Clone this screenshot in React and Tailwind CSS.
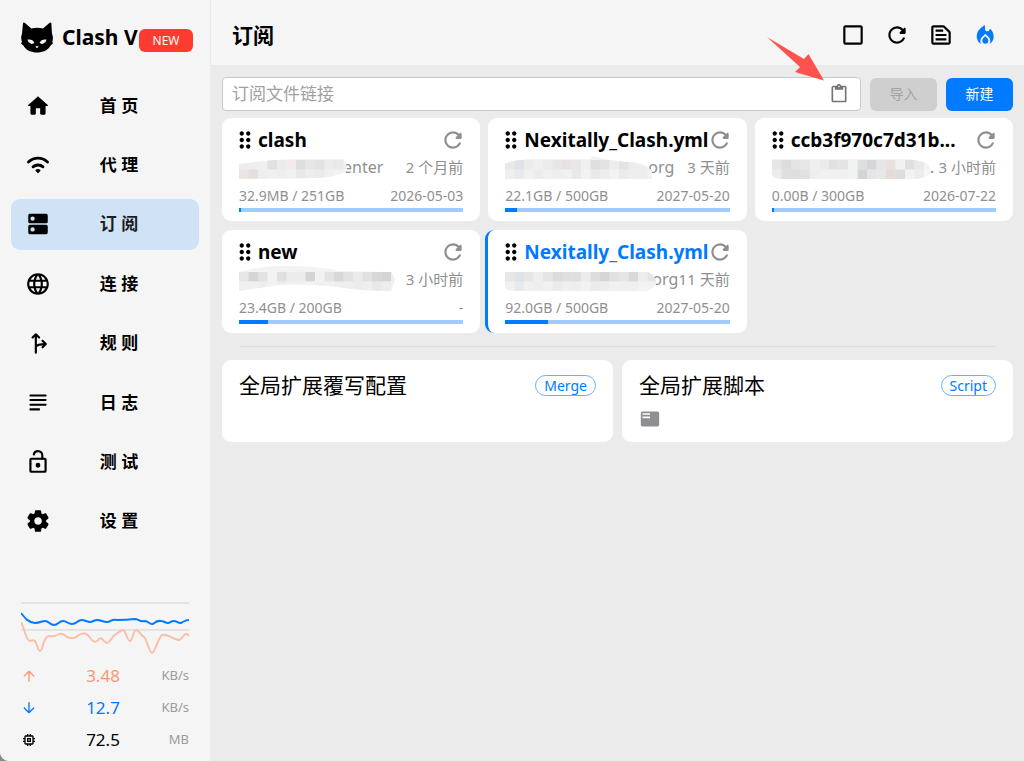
import React from "react";
import {
  MdLanguage,
  MdCheckBoxOutlineBlank,
  MdOutlineTextSnippet,
  MdDragIndicator,
  MdOutlineContentPaste,
  MdFeaturedPlayList,
  MdMemory,
} from "react-icons/md";

function Glyph({ className = "size-[26px]", children }) {
  return (
    <svg viewBox="0 0 24 24" fill="currentColor" className={className} aria-hidden="true">
      {children}
    </svg>
  );
}

function LineGlyph({ className = "size-[26px]", children }) {
  return (
    <svg
      viewBox="0 0 24 24"
      fill="none"
      stroke="currentColor"
      strokeWidth="2"
      strokeLinecap="round"
      strokeLinejoin="round"
      className={className}
      aria-hidden="true"
    >
      {children}
    </svg>
  );
}

const HomeIcon = () => (
  <Glyph>
    <path d="M10 19v-5h4v5c0 .55.45 1 1 1h3c.55 0 1-.45 1-1v-7h1.7c.46 0 .68-.57.33-.87L12.67 3.6c-.38-.34-.96-.34-1.34 0l-8.36 7.53c-.34.3-.13.87.33.87H5v7c0 .55.45 1 1 1h3c.55 0 1-.45 1-1z" />
  </Glyph>
);

const WifiIcon = () => (
  <LineGlyph>
    <path strokeWidth="2.6" d="M3.200 9.200C8.500 4.500 15.500 4.500 20.800 9.200M7.400 13.700C10 11.400 14 11.400 16.600 13.700" />
    <path fill="currentColor" strokeWidth="1.400" d="M10.400 17q1.600-1 3.200 0L12 18.800z" />
  </LineGlyph>
);

const DnsIcon = () => (
  <Glyph>
    <path
      fillRule="evenodd"
      d="M4.500 2.600h15A1.500 1.500 0 0 1 21 4.100v5.800a1.500 1.500 0 0 1-1.500 1.500h-15A1.500 1.500 0 0 1 3 9.900v-5.800A1.500 1.500 0 0 1 4.500 2.600zM7 5a2 2 0 1 0 0 4 2 2 0 0 0 0-4zM4.500 12.800h15a1.500 1.500 0 0 1 1.500 1.500v5.600a1.500 1.500 0 0 1-1.500 1.500h-15A1.500 1.500 0 0 1 3 19.900v-5.600A1.500 1.500 0 0 1 4.500 12.800zM7 15a2 2 0 1 0 0 4 2 2 0 0 0 0-4z"
    />
  </Glyph>
);

const ForkIcon = () => (
  <LineGlyph>
    <path d="M10 21V4.500M7 7l3-3 3 3M10 15.500C11 13.500 13 13 19 13M16.200 10l3 3-3 3" />
  </LineGlyph>
);

const SubjectIcon = () => (
  <LineGlyph>
    <path strokeWidth="1.900" d="M5 5h14M5 9.300h14M5 13.600h14M5 17.900h8" />
  </LineGlyph>
);

const LockIcon = () => (
  <LineGlyph>
    <rect x="5" y="9" width="14" height="12" rx="1" />
    <path d="M16 9V6.200C16 3.600 14.200 2 12 2 10 2 8.500 3.300 8.100 5" />
    <circle cx="12" cy="15" r="1.200" fill="currentColor" />
  </LineGlyph>
);

const SettingsIcon = () => (
  <Glyph>
    <path d="M19.500 12c0-.23-.01-.45-.03-.68l1.860-1.410c.4-.3.51-.86.26-1.300l-1.870-3.230a.987.987 0 0 0-1.250-.42l-2.150.91c-.37-.26-.76-.49-1.170-.68l-.29-2.310c-.06-.5-.49-.88-.99-.88h-3.730c-.51 0-.94.38-1 .88l-.29 2.310c-.41.19-.8.42-1.170.68l-2.150-.91c-.46-.2-1-.02-1.250.42L2.410 8.620c-.25.44-.14.99.26 1.300l1.860 1.410a7.343 7.343 0 0 0 0 1.350l-1.860 1.410c-.4.3-.51.86-.26 1.300l1.870 3.230c.25.44.79.62 1.250.42l2.150-.91c.37.26.76.49 1.170.68l.29 2.310c.06.5.49.88.99.88h3.730c.5 0 .93-.38.99-.88l.29-2.310c.41-.19.8-.42 1.170-.68l2.150.91c.46.2 1 .02 1.250-.42l1.870-3.230c.25-.44.14-.99-.26-1.300l-1.860-1.410c.03-.23.04-.45.04-.68zm-7.460 3.500c-1.930 0-3.500-1.570-3.500-3.500s1.570-3.500 3.500-3.500 3.500 1.570 3.500 3.500-1.570 3.500-3.500 3.500z" />
  </Glyph>
);

const RefreshIcon = () => (
  <Glyph>
    <path d="M17.650 6.350c-1.630-1.630-3.940-2.570-6.480-2.310-3.670.37-6.690 3.350-7.100 7.020C3.520 15.910 7.270 20 12 20c3.190 0 5.930-1.870 7.210-4.560.32-.67-.16-1.440-.9-1.440-.37 0-.72.2-.88.53-1.130 2.430-3.840 3.970-6.800 3.310-2.220-.49-4.010-2.300-4.480-4.520C5.310 9.440 8.260 6 12 6c1.660 0 3.140.69 4.220 1.780l-1.510 1.510c-.63.63-.19 1.710.7 1.710H19c.55 0 1-.45 1-1V6.410c0-.89-1.080-1.340-1.710-.71l-.64.65z" />
  </Glyph>
);

const FireIcon = () => (
  <svg viewBox="0 0 78 78" fill="currentColor" className="size-[26px]" aria-hidden="true">
    <path d="M39 11V20Q39 28 46 28 52 28 54 20 65 29 65 43 65 58 53 66 55 61 55 57 55 50 50 45L40 35 30 45Q25 50 25 57 25 61 27 66 14 58 14 42 14 25 35 11Q39 9 39 11Z" />
    <path d="M40 43L34 49Q31 52 31 56C31 61 35 65 40 65S49 61 49 56Q49 52 46 49Z" />
  </svg>
);

const CatLogo = () => (
  <svg viewBox="63 65 96 92" className="h-[31px] w-8 shrink-0" aria-hidden="true">
    <path d="M69 68Q70 64 74 67L94 84Q111 79 129 84L149 67Q153 64 154 68L156 100Q161 112 157 124L159 129 152 135C143 150 128 156 111 156S79 150 70 135L63 129 66 124Q61 112 66 100Z" />
    <path fill="#f5f5f5" d="M82 117Q99 115 103 127 100 131 93 130 84 127 82 117zM140 117Q123 115 119 127 122 131 129 130 138 127 140 117zM106 138Q111 135 116 138L111 143z" />
  </svg>
);

const navItems = [
  { label: "首 页", icon: <HomeIcon /> },
  { label: "代 理", icon: <WifiIcon /> },
  { label: "订 阅", icon: <DnsIcon />, active: true },
  { label: "连 接", icon: <MdLanguage className="size-[26px]" /> },
  { label: "规 则", icon: <ForkIcon /> },
  { label: "日 志", icon: <SubjectIcon /> },
  { label: "测 试", icon: <LockIcon /> },
  { label: "设 置", icon: <SettingsIcon /> },
];

function Traffic() {
  return (
    <svg viewBox="0 0 168 56" preserveAspectRatio="none" className="h-14 w-full" fill="none" aria-hidden="true">
      <path stroke="#dedede" strokeWidth="1.400" d="M0 2H168M0 29H168" />
      <path
        stroke="#fbbfa9"
        strokeWidth="2"
        d="M0 21C3 26 5 40 9 40 11 40 12 38 14 40 16 43 17 50 19 50 22 50 22 35 28 35 32 35 33 36 36 34 40 31 43 33 46 36 50 38 55 37 58 34 63 31 67 33 70 38 73 42 76 41 78 38 81 35 83 42 86 42 89 42 91 35 95 33 98 31 101 29 102 29 105 29 106 40 109 40 112 40 112 29 115 29 118 29 119 34 123 36 126 38 128 52 131 52 134 52 136 39 141 34 146 32 153 39 158 39 161 39 162 33 165 33Q167 33 168 35"
      />
      <path
        stroke="#007aff"
        strokeWidth="2"
        d="M0 12C4 17 8 22 14 22 19 22 21 20 24 20 28 20 29 24 33 24 37 24 38 20 42 20 46 20 47 23 51 23 56 23 56 19 61 19 64 19 66 21 69 21 72 21 73 19 76 19 80 19 82 21 86 21 90 21 90 18 96 19Q105 19 114 18C118 18 118 21 124 20 127 20 128 23 131 23 134 23 134 19 140 20 143 20 144 22 147 22 149 22 150 20 153 20 156 20 156 22 160 22 164 20 164 19 168 19"
      />
    </svg>
  );
}

const stats = [
  {
    value: "3.48",
    unit: "KB/s",
    color: "text-[#ff9472]",
    icon: <LineGlyph className="size-4"><path d="M12 20V5M5 12l7-7 7 7" /></LineGlyph>,
  },
  {
    value: "12.7",
    unit: "KB/s",
    color: "text-[#007aff]",
    icon: <LineGlyph className="size-4"><path d="M12 4v15M5 12l7 7 7-7" /></LineGlyph>,
  },
  { value: "72.5", unit: "MB", color: "text-black", icon: <MdMemory className="size-4" /> },
];

function Sidebar() {
  return (
    <aside className="flex w-[211px] shrink-0 flex-col border-r border-[#ebebeb] bg-[#f5f5f5]">
      <div className="relative flex h-20 items-center gap-[9px] pl-[21px] pb-[6px]">
        <CatLogo />
        <span className="text-[21px] leading-7 font-bold whitespace-nowrap">Clash V</span>
        <span className="absolute top-[29px] left-[139px] flex h-[23px] w-[54px] items-center justify-center rounded-md bg-[#ff3b30] text-xs text-white">
          NEW
        </span>
      </div>
      <nav className="flex min-h-[467px] flex-col justify-between px-[11px]">
        {navItems.map((item) => (
          <a
            key={item.label}
            href="#"
            className={
              item.active
                ? "flex h-[51px] items-center rounded-[9px] bg-[#d0e2f6] pl-[14px] text-[#1c1c1c]"
                : "flex h-[51px] items-center rounded-[9px] pl-[14px]"
            }
          >
            <span className="text-black">{item.icon}</span>
            <span className="flex-1 pr-3 text-center text-[17px] leading-6 font-bold">{item.label}</span>
          </a>
        ))}
      </nav>
      <div className="mt-auto px-[21px] pb-[5px]">
        <Traffic />
        <ul className="mt-[3px]">
          {stats.map((s) => (
            <li key={s.value} className={`flex h-8 items-center ${s.color}`}>
              <span className="flex w-4 justify-center">{s.icon}</span>
              <span className="flex-1 pl-4 text-center text-[17px] leading-6">{s.value}</span>
              <span className="w-9 text-right text-[13px] text-[#9b9b9b]">{s.unit}</span>
            </li>
          ))}
        </ul>
      </div>
    </aside>
  );
}

/* Pixelated cover over a subscription host: two rows of cells inside a soft outline. */
function Mosaic({ width, rows, shape, clip }) {
  const cell = 9.5;
  return (
    <svg viewBox={`0 0 ${width} 26`} style={{ width }} className="relative h-[26px] shrink-0" aria-hidden="true">
      <clipPath id={clip}>
        <path d={shape} />
      </clipPath>
      <g clipPath={`url(#${clip})`}>
        <rect width={width} height="26" fill="#f3f3f3" />
        {rows.map((row, r) =>
          row.split(" ").map((c, i) => (
            <rect key={`${r}-${i}`} x={i * cell} y={6 + r * cell} width={cell + 0.3} height={cell + 0.3} fill={`#${c}`} />
          ))
        )}
      </g>
    </svg>
  );
}

const profiles = [
  {
    name: "clash", host: "enter", updated: "2 个月前", usage: "32.9MB / 251GB", expire: "2026-05-03", used: 1, width: 108,
    rows: [
      "ececec eeeeee f0f0f0 e1e1e1 ebebeb f2ebe9 dedede e6e6e6 e2e2e2 ececec e9e9e9 f1f1f1",
      "e9e6e6 e6dedc eeeeee f0f0f0 eeeeee f1f1f1 e8e8e8 ededed e9eceb f0f0f0 f2f2f2 f4f4f4",
    ],
    shape: "M0 10Q25 7 34 6Q70 4 104 5Q108 10 108 17Q96 23 80 24L0 25Z",
  },
  {
    name: "Nexitally_Clash.yml", host: "org", updated: "3 天前", usage: "22.1GB / 500GB", expire: "2027-05-20", used: 5, width: 147,
    rows: [
      "e8e8e8 dfe3e8 ececec f0f0f0 ebebeb e7e7e7 e8e1df e7e7e7 f0f0f0 dddfe2 e3e3e3 ededed e3e3e3 ececec eeeeee f1f1f1",
      "efefef e8eaed f1f1f1 ececec f0f0f0 eeeeee f0f0f0 e9e9e9 f2f2f2 e9e9e9 ededed f2f2f2 ebebeb eeeeee ededed f2f2f2",
    ],
    shape: "M0 10Q10 5 28 5L85 5 87 2Q112 8 125 8Q143 10 147 18V25H0Z",
  },
  {
    name: "ccb3f970c7d31b...", host: ".", gap: true, updated: "3 小时前", usage: "0.00B / 300GB", expire: "2026-07-22", used: 1, width: 158,
    rows: [
      "e6e6e6 dcdcdc e4e4e4 e6e6e6 efefef ebebeb e1e1e1 e4e4e4 f2f2f2 dddfe0 d5d6d9 e5e5e5 e9e1df f1f1f1 dfdfdf e9e9e9 f4f4f4",
      "ececec dfdfdf dedede e1e1e1 eeeeee f0f0f0 f1f1f1 f0f0f0 f2f2f2 d3d5d8 e5e5e5 e7e7e7 e5dcda dddddd f2f2f2 ececec f6f6f6",
    ],
    shape: "M0 5H135Q155 7 158 13V20Q152 25 140 25H12Q0 25 0 20Z",
  },
  {
    name: "new", host: "", updated: "3 小时前", usage: "23.4GB / 200GB", expire: "-", used: 13, width: 156,
    rows: [
      "e6e6e6 d5d5d5 e2e2e2 f2f2f2 dfdfdf ebebeb eeebea d4d5d8 f2f2f2 e3e3e3 d7d8da e2e2e2 ebebeb e1e1e1 d7d7d9 d2d4d8 eeeeee",
      "f0f0f0 f1f1f1 eeeeee f2f2f2 ededed f1f1f1 efefef f3f3f3 f0f0f0 f1f1f1 eeeeee efefef ececec efefef e9e9e9 ededed f2f2f2",
    ],
    shape: "M0 6Q20 0 45 0Q80 0 100 5L152 6 156 14 152 25Q120 25 100 21Q60 17 40 19L0 25Z",
  },
  {
    name: "Nexitally_Clash.yml", host: "org", updated: "11 天前", usage: "92.0GB / 500GB", expire: "2027-05-20", used: 19, width: 151, active: true,
    rows: [
      "e7e7e7 dfe3e8 e6e6e6 eeeeee e5e5e5 dcdcdc dfdfdf dde0e3 ececec dcdcdc d4d6d8 e1e1e1 e5e5e5 d8d9db ededed e5e5e5",
      "f1f1f1 e7eaec f0f0f0 eeeeee f1f1f1 ebebeb efefef eeeeee f2f2f2 ebebeb ededed f1f1f1 f0f0f0 f0f0f0 f3f3f3 f2f2f2",
    ],
    shape: "M0 6H143Q151 10 151 18Q146 25 139 25H10Q0 25 0 20Z",
  },
];

function ProfileCard({ p, index }) {
  return (
    <article
      className={
        p.active
          ? "-ml-[3px] min-w-0 rounded-[9px] border-l-[3px] border-[#007aff] bg-white px-[17px] pt-2 pb-[9px]"
          : "min-w-0 rounded-[9px] bg-white px-[17px] pt-2 pb-[9px]"
      }
    >
      <div className="flex h-7 items-center">
        <MdDragIndicator className="-ml-[7px] size-[26px] shrink-0" />
        <h2
          className={
            p.active
              ? "min-w-0 flex-1 text-[19px] leading-7 font-bold whitespace-nowrap text-[#007aff]"
              : "min-w-0 flex-1 text-[19px] leading-7 font-bold whitespace-nowrap"
          }
        >
          {p.name}
        </h2>
        <button type="button" aria-label="更新" className="-mr-[3px] shrink-0 text-[#8e8e8e]">
          <RefreshIcon />
        </button>
      </div>
      <div className="flex h-[26px] items-center whitespace-nowrap text-[#8f8f8f]">
        <Mosaic width={p.width} rows={p.rows} shape={p.shape} clip={`cover-${index}`} />
        <span className={p.gap ? "text-[17px] leading-6" : "-ml-1 text-[16px] leading-6"}>{p.host}</span>
        <span className="ml-auto text-[15px] leading-6">{p.updated}</span>
      </div>
      <div className="mt-[3px] mb-px flex h-6 items-center justify-between text-[14px] text-[#8f8f8f]">
        <span>{p.usage}</span>
        <span>{p.expire}</span>
      </div>
      <div className="h-1 bg-[#9fcbff]">
        <div className="h-full bg-[#007aff]" style={{ width: `${p.used}%` }} />
      </div>
    </article>
  );
}

function ExtensionCard({ title, tag, children }) {
  return (
    <article className="min-h-[82px] rounded-[9px] bg-white px-[17px] pt-[11px]">
      <div className="flex h-7 items-center justify-between">
        <h2 className="text-[21px] leading-7">{title}</h2>
        <span className="flex h-[21px] items-center rounded-full border border-[#66afff] px-2 text-[14px] text-[#007aff]">
          {tag}
        </span>
      </div>
      {children}
    </article>
  );
}

export default function App() {
  return (
    <div className="min-h-screen bg-[#8a8a8a] font-['Noto_Sans','Noto_Sans_CJK_SC',sans-serif] text-black">
      <div className="flex min-h-screen overflow-hidden rounded-bl-[9px] bg-[#ebebeb]">
        <Sidebar />
        <div className="flex min-w-0 flex-1 flex-col">
          <header className="flex h-[66px] items-center justify-between border-b border-[#e8e8e8] bg-[#f5f5f5] pt-[5px] pr-[26px] pl-[21px]">
            <h1 className="text-[21px] leading-7 font-bold">订阅</h1>
            <div className="flex gap-[18px]">
              <button type="button" aria-label="批量"><MdCheckBoxOutlineBlank className="size-[26px]" /></button>
              <button type="button" aria-label="更新全部"><RefreshIcon /></button>
              <button type="button" aria-label="查看配置"><MdOutlineTextSnippet className="size-[26px]" /></button>
              <button type="button" aria-label="重新激活" className="text-[#007aff]"><FireIcon /></button>
            </div>
          </header>
          <main className="flex-1 px-[11px] pt-[11px]">
            <form className="flex items-center gap-[9px]">
              <div className="relative flex h-[34px] flex-1 items-center rounded-[4px] border border-[#c8c8c8] bg-white pr-[11px] pl-[9px]">
                <input
                  type="text"
                  aria-label="订阅文件链接"
                  placeholder="订阅文件链接"
                  className="min-w-0 flex-1 text-[17px] leading-6 outline-none placeholder:text-[#a0a0a0]"
                />
                <button type="button" aria-label="粘贴" className="text-[#757575]">
                  <MdOutlineContentPaste className="size-5" />
                </button>
                <svg viewBox="0 0 58 44" className="absolute right-[35px] bottom-[29px] h-11 w-[58px]" aria-hidden="true">
                  <path fill="#ff524f" d="M0 0L37 22 41.500 17 57 43.500 28 35 33 30Z" />
                </svg>
              </div>
              <button type="button" disabled className="h-[33px] w-[67px] rounded-md bg-[#cfcfcf] pb-[2px] text-[14px] text-[#a3a3a3]">
                导入
              </button>
              <button type="button" className="h-[33px] w-[67px] rounded-md bg-[#007aff] pb-[2px] text-[14px] text-white">
                新建
              </button>
            </form>
            <section className="mt-[7px] grid grid-cols-3 gap-x-2 gap-y-[9px]">
              {profiles.map((p, i) => (
                <ProfileCard key={i} p={p} index={i} />
              ))}
            </section>
            <hr className="mx-[17px] mt-[13px] mb-[13px] border-[#dedede]" />
            <section className="grid grid-cols-2 gap-[9px]">
              <ExtensionCard title="全局扩展覆写配置" tag="Merge" />
              <ExtensionCard title="全局扩展脚本" tag="Script">
                <button type="button" aria-label="控制台" className="mt-[10px] ml-[1px] block text-[#8e8e93]">
                  <MdFeaturedPlayList className="size-5" />
                </button>
              </ExtensionCard>
            </section>
          </main>
        </div>
      </div>
    </div>
  );
}
